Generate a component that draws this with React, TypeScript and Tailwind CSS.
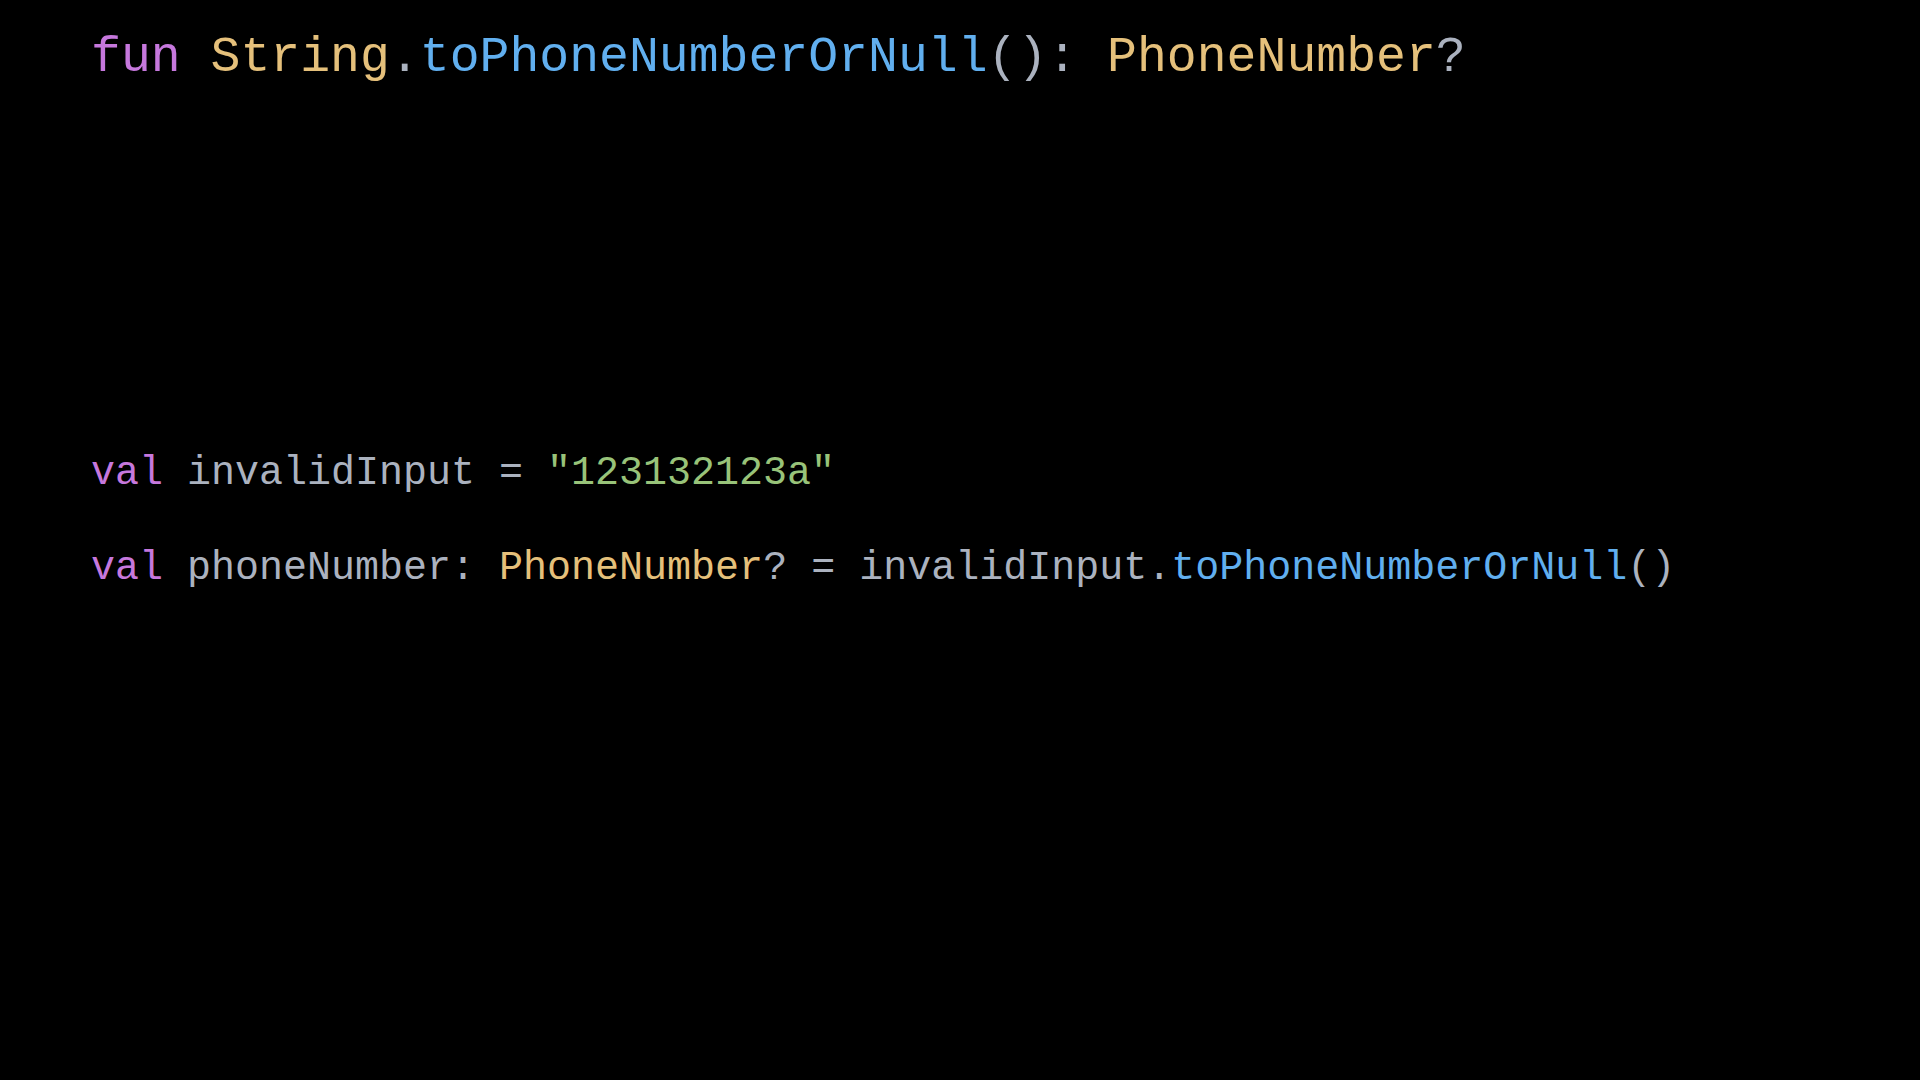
import React from 'react'

type Tok = { t: string; c: string }

const P = 'text-[#c678dd]'
const Y = 'text-[#e5c07b]'
const B = 'text-[#61afef]'
const G = 'text-[#abb2bf]'
const N = 'text-[#98c379]'

function Line({ toks, className }: { toks: Tok[]; className: string }) {
  return (
    <div className={`whitespace-pre ${className}`}>
      {toks.map((k, i) => (
        <span key={i} className={k.c}>
          {k.t}
        </span>
      ))}
    </div>
  )
}

export default function App() {
  const signature: Tok[] = [
    { t: 'fun ', c: P },
    { t: 'String', c: Y },
    { t: '.', c: G },
    { t: 'toPhoneNumberOrNull', c: B },
    { t: '(): ', c: G },
    { t: 'PhoneNumber', c: Y },
    { t: '?', c: G },
  ]

  const input: Tok[] = [
    { t: 'val ', c: P },
    { t: 'invalidInput = ', c: G },
    { t: '"123132123a"', c: N },
  ]

  const call: Tok[] = [
    { t: 'val ', c: P },
    { t: 'phoneNumber: ', c: G },
    { t: 'PhoneNumber', c: Y },
    { t: '? = invalidInput.', c: G },
    { t: 'toPhoneNumberOrNull', c: B },
    { t: '()', c: G },
  ]

  return (
    <div className="w-full h-[1080px] bg-black pl-[91px] pt-[33px] flex flex-col font-['Liberation_Mono','Courier_New',monospace]">
      <Line toks={signature} className="text-[49.8px] leading-[50px]" />
      <Line toks={input} className="mt-[371px] text-[40px] leading-[40px]" />
      <Line toks={call} className="mt-[55px] text-[40px] leading-[40px]" />
    </div>
  )
}
